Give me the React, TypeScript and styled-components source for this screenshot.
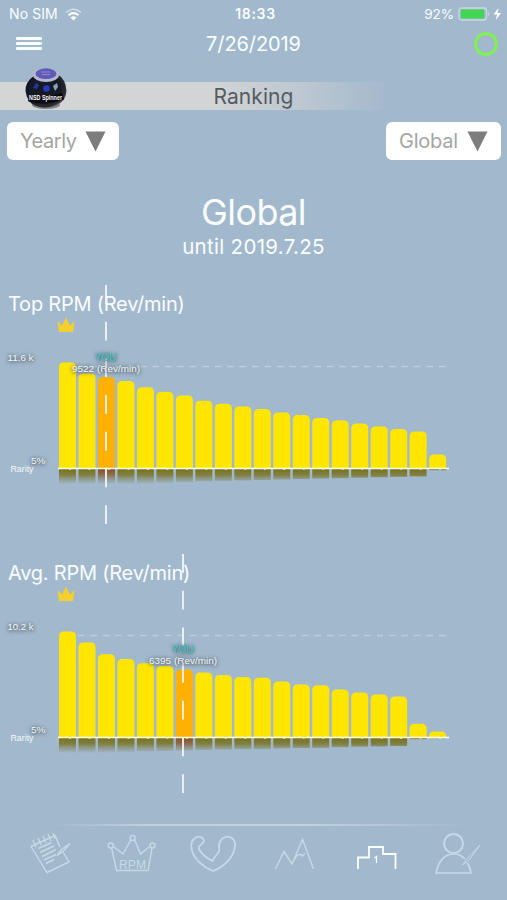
import React from "react";
import styled, { createGlobalStyle } from "styled-components";

const Global = createGlobalStyle`
  body { margin: 0; background: #a2b9cd; }
  * { box-sizing: border-box; }
`;

const Screen = styled.main`
  width: 507px;
  height: 900px;
  overflow: hidden;
  display: flex;
  flex-direction: column;
  background: #a2b9cd;
  color: #fafdff;
  font-family: Inter, "Liberation Sans", sans-serif;
`;

const StatusBar = styled.div`
  display: grid;
  grid-template-columns: 1fr auto 1fr;
  align-items: center;
  height: 28px;
  padding: 0 5px 0 9px;
  font-size: 14px;
  line-height: 28px;
`;

const StatusGroup = styled.div<{ $end?: boolean }>`
  display: flex;
  align-items: center;
  gap: ${(p) => (p.$end ? "4px" : "7px")};
  justify-content: ${(p) => (p.$end ? "flex-end" : "flex-start")};
`;

const Label = styled.span<{ $size: number; $track?: number; $weight?: number }>`
  font-size: ${(p) => p.$size}px;
  letter-spacing: ${(p) => p.$track ?? 0}px;
  font-weight: ${(p) => p.$weight ?? 400};
  white-space: nowrap;
`;

const NavBar = styled.header`
  display: grid;
  grid-template-columns: 1fr auto 1fr;
  align-items: center;
  height: 32px;
  padding: 0 9px 0 9px;
`;

const MenuButton = styled.div`
  display: flex;
  flex-direction: column;
  gap: 2px;
  width: 26px;
  margin: 0 0 1px 7px;
`;

const MenuLine = styled.i`
  height: 3px;
  border-radius: 1px;
  background: #f7fcff;
`;

const Ring = styled.div`
  justify-self: end;
  width: 24px;
  height: 24px;
  border: 3px solid #7df250;
  border-radius: 50%;
`;

const Banner = styled.div`
  display: flex;
  align-items: center;
  justify-content: center;
  height: 28px;
  margin-top: 22px;
  color: #555b60;
  background: linear-gradient(90deg, #d4d5d5 0, #d2d4d5 215px, rgba(202, 207, 211, 0.75) 290px, rgba(200, 207, 214, 0) 387px);
`;

const BallSlot = styled.div`
  position: absolute;
  left: 24px;
  top: 67px;
  line-height: 0;
`;

const Filters = styled.div`
  display: flex;
  justify-content: space-between;
  padding: 12px 6px 0 7px;
`;

const Select = styled.button<{ $width: number }>`
  display: flex;
  align-items: center;
  justify-content: space-between;
  width: ${(p) => p.$width}px;
  height: 38px;
  padding: 0 13px 0 13px;
  border: 0;
  border-radius: 6px;
  background: #fff;
  color: #a5a5a5;
  font-family: inherit;
`;

const Heading = styled.section`
  display: flex;
  flex-direction: column;
  align-items: center;
  height: 125px;
  padding-top: 31px;
`;

const HeadLine = styled.div<{ $height: number }>`
  height: ${(p) => p.$height}px;
  line-height: ${(p) => p.$height}px;
`;

const ChartSection = styled.section`
  display: grid;
  height: 269px;
  flex: none;
`;

const ChartTitle = styled.h2`
  grid-area: 1 / 1;
  margin: 7px 0 0 8px;
  font-size: 20px;
  line-height: 24px;
  font-weight: 400;
  letter-spacing: -0.23px;
`;

const ChartSvg = styled.svg`
  grid-area: 1 / 1;
  display: block;
  font-family: "Liberation Sans", sans-serif;
`;

const Shade = styled.g`
  text-shadow: 0 1px 4px rgba(50, 55, 60, 0.9), 0 0 3px rgba(80, 85, 90, 0.6);
`;

const TabBar = styled.nav`
  display: flex;
  flex-direction: column;
  height: 77px;
`;

const Divider = styled.div`
  height: 2px;
  margin: 1px 40px 0 54px;
  background: linear-gradient(90deg, rgba(190, 208, 223, 0) 0, #bfd0df 22%, #c2d2e1 60%, rgba(190, 208, 223, 0));
`;

const Tabs = styled.div`
  display: grid;
  grid-template-columns: repeat(6, 81px);
  justify-content: center;
  padding-top: 5px;
`;

const TabIcon = styled.svg<{ $active?: boolean }>`
  width: 81px;
  height: 44px;
  fill: none;
  stroke: ${(p) => (p.$active ? "#fbfdff" : "#c5dae8")};
  stroke-width: ${(p) => (p.$active ? 1.8 : 1.4)};
  font-family: "Liberation Sans", sans-serif;
`;

interface ChartData {
  id: string;
  title: string;
  max: string;
  you: number;
  youX: number;
  youY: number;
  value: string;
  heights: number[];
}

const charts: ChartData[] = [
  {
    id: "top",
    title: "Top RPM (Rev/min)",
    max: "11.6 k",
    you: 2,
    youX: 106,
    youY: 76,
    value: "9522 (Rev/min)",
    heights: [106, 95, 91.5, 87.5, 81.3, 76.7, 73, 67.7, 64.7, 62, 59.5, 56, 53.5, 50.5, 48, 45, 42, 39.5, 37, 14],
  },
  {
    id: "avg",
    title: "Avg. RPM (Rev/min)",
    max: "10.2 k",
    you: 6,
    youX: 183,
    youY: 99,
    value: "6395 (Rev/min)",
    heights: [106, 95, 83.2, 78.5, 74.2, 71.5, 68, 65, 62.5, 60.5, 59.7, 56, 53, 52.3, 48, 45, 43, 41, 13.7, 6],
  },
];

const BASE = 183.5;
const PITCH = 19.48;

function barPath(x: number, h: number) {
  const top = BASE - h;
  const r = Math.min(5, h - 1);
  return `M${x} ${BASE}V${top + r}Q${x} ${top} ${x + 5} ${top}H${x + 12}Q${x + 17} ${top} ${x + 17} ${top + r}V${BASE}Z`;
}

function RankChart({ data }: { data: ChartData }) {
  const { youX, youY } = data;
  return (
    <ChartSection>
      <ChartTitle>{data.title}</ChartTitle>
      <ChartSvg width="507" height="269" viewBox="0 0 507 269">
        <defs>
          <linearGradient id={`${data.id}-mirror`} x1="0" y1={BASE} x2="0" y2={BASE + 16} gradientUnits="userSpaceOnUse">
            <stop offset="0" stopColor="#77711c" />
            <stop offset="0.4" stopColor="#7d7b34" stopOpacity="0.92" />
            <stop offset="1" stopColor="#8b9285" stopOpacity="0.1" />
          </linearGradient>
          <linearGradient id={`${data.id}-mirror-you`} x1="0" y1={BASE} x2="0" y2={BASE + 16} gradientUnits="userSpaceOnUse">
            <stop offset="0" stopColor="#854b1c" />
            <stop offset="0.4" stopColor="#8c673f" stopOpacity="0.9" />
            <stop offset="1" stopColor="#8b9285" stopOpacity="0.1" />
          </linearGradient>
        </defs>
        <path d="M57.500 36l4.500 4.500 4-8 4 8 4.700-4.500-1.700 11h-14z" fill="#f5cf2b" />
        <path d="M77.800 81.500H446" stroke="#bccedb" strokeWidth="1.600" strokeDasharray="6.500 5.950" />
        {data.heights.map((h, i) => {
          const x = 59 + i * PITCH;
          const you = i === data.you;
          return (
            <g key={i}>
              <path d={barPath(x, h)} fill={you ? "#ffb000" : "#ffe600"} />
              <rect
                x={x}
                y={BASE}
                width="17"
                height={h < 16 ? h * 0.12 : Math.min(15, 2 + h * 0.16)}
                fill={`url(#${data.id}-mirror${you ? "-you" : ""})`}
              />
            </g>
          );
        })}
        <path d="M58 183.500H449" stroke="#fffef0" strokeWidth="1.500" />
        <path d="M69 184.300H449" stroke="#fffef0" strokeWidth=".8" strokeDasharray="2 17.480" />
        <path d={`M${youX} 0V239`} stroke="#eff6fc" strokeWidth="1.800" strokeDasharray="18.700 18" />
        <Shade fill="#f4f8fa" fontSize="9.500">
          <text x="7.500" y="76" textLength="26" lengthAdjust="spacingAndGlyphs">{data.max}</text>
          <text x="31" y="178.500" textLength="14.500" lengthAdjust="spacingAndGlyphs">5%</text>
          <text x={youX} y={youY} fill="#25ccc5" fontSize="10" textAnchor="middle">YOU</text>
          <text x={youX - 34} y={youY + 10.5} textLength="68" lengthAdjust="spacingAndGlyphs">{data.value}</text>
        </Shade>
        <text x="10.500" y="187" fill="#f4f8fa" fontSize="8.500" textLength="23" lengthAdjust="spacingAndGlyphs">Rarity</text>
      </ChartSvg>
    </ChartSection>
  );
}

function SpinnerBall() {
  return (
    <svg width="44" height="43" viewBox="0 0 44 43">
      <defs>
        <radialGradient id="shell" cx="0.4" cy="0.4" r="0.65">
          <stop offset="0" stopColor="#252b57" />
          <stop offset="0.55" stopColor="#101321" />
          <stop offset="0.9" stopColor="#292c32" />
          <stop offset="1" stopColor="#6b7077" />
        </radialGradient>
      </defs>
      <ellipse cx="22" cy="38" rx="14" ry="4" fill="#858681" />
      <path d="M11 8Q1 15 1.500 24Q3 36 12 39Q22 43 33 38Q42 34 42.500 24Q42 12 33 7Z" fill="url(#shell)" />
      <path d="M8 17Q21 10 36 16L38 27Q21 34 5 27Z" fill="#171a25" />
      <ellipse cx="22" cy="8" rx="13" ry="7" fill="#b4b9cd" />
      <ellipse cx="22" cy="6.700" rx="10.500" ry="5.400" fill="#625abb" />
      <path d="M17 5h9M18 7.500h8" stroke="#8f8bce" />
      <circle cx="22.500" cy="21.500" r="3.300" fill="#243bbc" />
      <path d="M12 16l3 2-2 4-4-1z" fill="#22399b" />
      <path d="M29 19l4-3 1 4-3 4z" fill="#84a8b7" />
      <path d="M5 31Q21 36 39 29" fill="none" stroke="#07080b" strokeWidth="7" />
      <text x="5" y="33" fill="#fff" fontFamily="Liberation Sans, sans-serif" fontSize="7.500" fontWeight="bold" textLength="33" lengthAdjust="spacingAndGlyphs">NSD Spinner</text>
    </svg>
  );
}

function Arrow() {
  return (
    <svg width="21" height="21" viewBox="0 0 21 21">
      <path d="M.5.500h20L10.500 20.500z" fill="#7d7d7d" />
    </svg>
  );
}

export default function App() {
  return (
    <Screen>
      <Global />
      <StatusBar>
        <StatusGroup>
          <Label $size={14} $track={0.1}>No SIM</Label>
          <svg width="17" height="13" viewBox="0 0 17 13" fill="none" stroke="#fafdff">
            <path d="M1 4.500Q8.500-2 16 4.500" strokeWidth="1.500" opacity=".55" />
            <path d="M3.500 7.200Q8.500 3 13.500 7.200" strokeWidth="2" />
            <path d="M5.500 9.500Q8.500 7 11.500 9.500L8.500 12.500z" fill="#fafdff" stroke="none" />
          </svg>
        </StatusGroup>
        <Label $size={14} $track={0.65} $weight={600}>18:33</Label>
        <StatusGroup $end>
          <Label $size={13.5}>92%</Label>
          <svg width="44" height="15" viewBox="0 0 44 15">
            <rect x="1" y="1" width="27.500" height="12" rx="3" fill="none" stroke="#cbd8e4" strokeWidth="1.300" />
            <rect x="2.800" y="2.500" width="23.500" height="9" rx="1.200" fill="#42d653" />
            <path d="M30 4.500Q32.500 7 30 9.500z" fill="#c7d6e3" />
            <path d="M40.500 1L35.500 7.500H39l-1.200 5.500L43 6H39.500z" fill="#fff" />
          </svg>
        </StatusGroup>
      </StatusBar>
      <NavBar>
        <MenuButton><MenuLine /><MenuLine /><MenuLine /></MenuButton>
        <Label $size={20} $track={-0.1}>7/26/2019</Label>
        <Ring />
      </NavBar>
      <Banner><Label $size={21} $track={0.1}>Ranking</Label></Banner>
      <BallSlot><SpinnerBall /></BallSlot>
      <Filters>
        <Select $width={112}><Label $size={20} $track={-0.45}>Yearly</Label><Arrow /></Select>
        <Select $width={115}><Label $size={20} $track={-0.25}>Global</Label><Arrow /></Select>
      </Filters>
      <Heading>
        <HeadLine $height={43}><Label $size={36} $track={-0.6}>Global</Label></HeadLine>
        <HeadLine $height={26}><Label $size={20.5} $track={0.3}>until 2019.7.25</Label></HeadLine>
      </Heading>
      {charts.map((c) => <RankChart key={c.id} data={c} />)}
      <TabBar>
        <Divider />
        <Tabs>
          <TabIcon viewBox="0 0 81 44">
            <path d="M20 15.500L44 4.500L49 16M52 21L58 31L36 41.500L20 15.500M27.500 17.500l13-6M29 21.500l14-6.500M31 25.500l14-7M33 29l12-5.500M35 32.500l8-4" />
            <path d="M59 12.500L50.500 18.500L46 24.500L52 20.500Z" />
            <path d="M22 9l3 7M27 7l3 7M32 5l3 7M37 3l3 7M42 2l2 6" />
          </TabIcon>
          <TabIcon viewBox="0 0 81 44">
            <path d="M19.500 16.500L24.500 39.500H56L60 16.500M21.500 15.500L31 23L39 8.500M42.500 8.500L48.500 23L57.500 15.500" />
            <circle cx="18.800" cy="14.500" r="2.500" /><circle cx="40.500" cy="7" r="2.500" /><circle cx="60.500" cy="14.500" r="2.500" />
            <text x="27" y="38" fontSize="12.500" fill="#c5dae8" stroke="none" textLength="27" lengthAdjust="spacingAndGlyphs">RPM</text>
          </TabIcon>
          <TabIcon viewBox="0 0 81 44">
            <path d="M30 7.500C25 3 17 8 18.500 17C20 28 31 36.500 40 40C50 36.500 59 28 61.500 18C64.500 7 55 3 49 8C44 12 47 17 46 20.500C44 23.500 41 26 39.500 30C33 27 28 22 26 18C24 14 34 12 30 7.500Z" strokeWidth="1.800" />
          </TabIcon>
          <TabIcon viewBox="0 0 81 44">
            <path d="M21.500 38L30 20.500L38 33L48.500 8.500L59.500 38M38 32L42.500 25Q47 22 48.500 25L51 22.500" />
          </TabIcon>
          <TabIcon $active viewBox="0 0 81 44">
            <path d="M23 38V26.500H34V16H48V23H60.500V38" />
            <path d="M39.500 27l2-1.500V32" strokeWidth="1.200" />
          </TabIcon>
          <TabIcon viewBox="0 0 81 44">
            <circle cx="37.500" cy="12.500" r="9.500" strokeWidth="1.900" />
            <path d="M49 28Q44 23 38 23Q24 23 20 42H55Q54.500 37 51.500 32" strokeWidth="1.700" />
            <path d="M64 14L51 28L46.500 34L53 29.500Z" strokeWidth="1" />
          </TabIcon>
        </Tabs>
      </TabBar>
    </Screen>
  );
}
